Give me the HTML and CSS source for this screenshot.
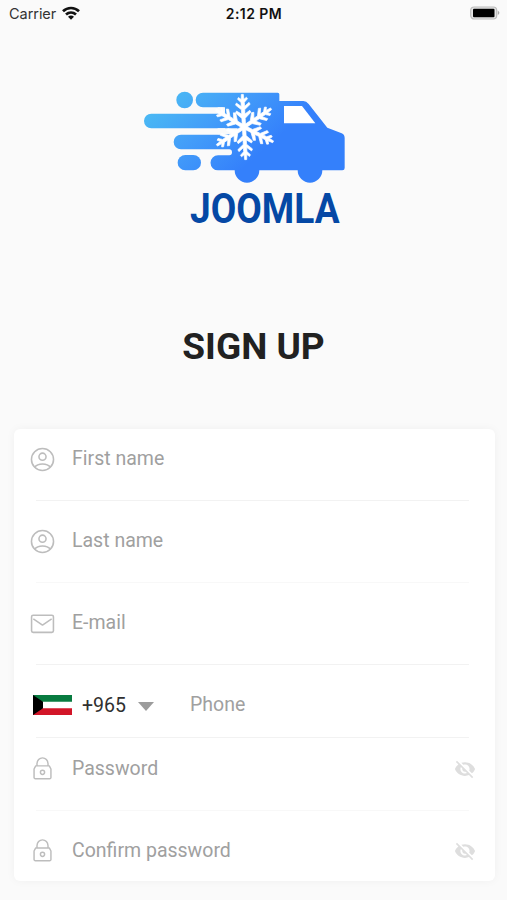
FILE: index.html
```html
<!DOCTYPE html>
<html lang="en">
<head>
<meta charset="utf-8">
<title>Sign up</title>
<link rel="stylesheet" href="styles.css">
</head>
<body>
<svg class="defs" width="0" height="0" aria-hidden="true">
  <symbol id="user" viewBox="0 0 24 24"><g fill="none" stroke="currentColor" stroke-width="1.5"><circle cx="12" cy="12" r="10.6"/><circle cx="12" cy="9.3" r="3.4"/><path d="M4.400 19.400C6.200 17 9 16.300 12 16.300s5.800.7 7.600 3.100"/></g></symbol>
  <symbol id="mail" viewBox="0 0 24 24"><g fill="none" stroke="currentColor" stroke-width="1.500" stroke-linejoin="round"><rect x="1.500" y="4" width="21" height="16.500" rx="1.500"/><path d="M3.200 7.500 12 13.500l8.800-6"/></g></symbol>
  <symbol id="lock" viewBox="0 0 24 24"><g fill="none" stroke="currentColor" stroke-width="1.400"><path d="M5.500 9.500h13l1.600 3v8.100a1.200 1.200 0 0 1-1.200 1.200H5.100a1.200 1.200 0 0 1-1.200-1.200v-8.100z" stroke-linejoin="round"/><path d="M6.700 9.500V7.500a5.300 5.700 0 0 1 10.600 0v2"/><circle cx="12" cy="15.700" r="2"/></g></symbol>
  <symbol id="hidden" viewBox="0 0 24 24"><path fill="currentColor" d="M12 7c2.760 0 5 2.240 5 5 0 .65-.13 1.260-.36 1.830l2.920 2.920c1.510-1.260 2.700-2.890 3.430-4.750-1.730-4.390-6-7.500-11-7.500-1.400 0-2.740.25-3.980.7l2.160 2.160C10.740 7.130 11.350 7 12 7zM2 4.270l2.280 2.280.46.46C3.080 8.300 1.780 10.020 1 12c1.730 4.390 6 7.500 11 7.500 1.550 0 3.030-.3 4.380-.84l.42.42L19.730 22 21 20.730 3.270 3 2 4.270zM7.530 9.800l1.550 1.550c-.05.21-.08.43-.08.65 0 1.660 1.340 3 3 3 .22 0 .44-.03.65-.08l1.550 1.550c-.67.33-1.410.53-2.200.53-2.760 0-5-2.240-5-5 0-.79.2-1.530.53-2.200z"/></symbol>
</svg>
<header class="status">
  <div class="carrier">Carrier
    <svg class="wifi" viewBox="0 0 18 14"><g fill="none" stroke="#111" stroke-width="2.700"><path d="M1 5.200C5.500.9 12.500.9 17 5.200"/><path d="M4 8.500c2.900-2.600 7.100-2.600 10 0"/></g><path d="M6 10.700c1.700-1.500 4.300-1.500 6 0l-3 3z" fill="#111"/></svg>
  </div>
  <div class="clock">2:12 PM</div>
  <svg class="battery" viewBox="0 0 32 16"><rect x="1.700" y="2" width="26" height="12" rx="3.500" fill="#e6e6e6" stroke="#bcbcbc" stroke-width="1.200"/><rect x="4" y="3.800" width="21.500" height="8.500" rx="1" fill="#000"/><path d="M28.800 5.500q3.200 2.300 0 4.600z" fill="#aaa"/></svg>
</header>
<main>
  <div class="brand">
    <svg class="logo" viewBox="0 0 660 315">
      <defs>
        <linearGradient id="sky" gradientUnits="userSpaceOnUse" x1="110" y1="10" x2="330" y2="260"><stop offset="0" stop-color="#4bbcf3"/><stop offset=".5" stop-color="#439df9"/><stop offset="1" stop-color="#3480fb"/></linearGradient>
        <path id="arm" d="M-5 0L-5-26-23-43-20-49-5-39V-52L-22-67-19-73-5-62V-74L-15-84-12-89-4-83-3-98H3L4-83 12-89 15-84 5-74V-62L19-73 22-67 5-52V-39L20-49 23-43 5-26 5 0z"/>
      </defs>
      <g fill="url(#sky)">
        <circle cx="149" cy="60" r="25"/>
        <rect x="128" y="225" width="70" height="46" rx="23"/>
        <path d="M204 38H428q5 0 5 5V63h72q9 0 16 9l56 71 43 17q9 4 9 14v90q0 7-7 7H562a37 37 0 0 1-74 0H373a37 37 0 0 1-74 0H249a22.500 22.500 0 0 1 0-45h34q8 0 8-9t-8-9H138a22 22 0 0 1 0-44H270V145H49a22 22 0 0 1 0-44H270V82H204a22 22 0 0 1 0-44z"/>
      </g>
      <path d="M447 78h54l40 52h-94z" fill="#fff"/>
      <path d="M248 82h15q6 0 6 10v9h-18zM248 145h60v13l-12 5h-48z" fill="#fafafa"/>
      <g transform="translate(327 141)" fill="#fff" stroke="#fff" stroke-width="2" stroke-linejoin="round">
        <use href="#arm" transform="rotate(-3)"/><use href="#arm" transform="rotate(56)"/><use href="#arm" transform="rotate(117)"/><use href="#arm" transform="rotate(177)"/><use href="#arm" transform="rotate(236)"/><use href="#arm" transform="rotate(301)"/>
      </g>
    </svg>
    <div class="wordmark">JOOMLA</div>
  </div>
  <h1>SIGN UP</h1>
  <form class="card">
    <div class="row first"><svg class="icon"><use href="#user"/></svg><span>First name</span></div>
    <div class="row faint"><svg class="icon"><use href="#user"/></svg><span>Last name</span></div>
    <div class="row"><svg class="icon"><use href="#mail"/></svg><span>E-mail</span></div>
    <div class="row phone">
      <svg class="flag" viewBox="0 0 39 20"><path fill="#fff" d="M0 0h39v20H0z"/><path fill="#087b40" d="M0 0h39v6.700H0z"/><path fill="#d21528" d="M0 13.300h39V20H0z"/><path d="M0 0l10 6.700v6.600L0 20z"/></svg>
      <span class="code">+965</span><i class="caret"></i><span>Phone</span>
    </div>
    <div class="row password faint"><svg class="icon"><use href="#lock"/></svg><span>Password</span><svg class="eye"><use href="#hidden"/></svg></div>
    <div class="row last"><svg class="icon"><use href="#lock"/></svg><span>Confirm password</span><svg class="eye"><use href="#hidden"/></svg></div>
  </form>
</main>
</body>
</html>
```
FILE: styles.css
```css
* { box-sizing: border-box; }
body { margin: 0; height: 900px; overflow: hidden; background: #fafafa; font-family: Roboto, "Liberation Sans", sans-serif; }
.defs { display: block; }
.status { height: 28px; padding: 0 6px 0 9px; display: grid; grid-template-columns: 1fr auto 1fr; align-items: center; font: 15px/28px Inter, sans-serif; color: #333; }
.carrier { display: flex; align-items: center; gap: 6px; font-size: 14.5px; letter-spacing: -.05px; }
.wifi { width: 18px; height: 14px; margin-top: -2px; }
.clock { margin-right: 2px; font-size: 14px; font-weight: 600; color: #111; letter-spacing: .45px; }
.battery { width: 32px; height: 16px; justify-self: end; margin-top: -2px; }
main { display: flex; flex-direction: column; }
.brand { width: 220px; height: 155px; margin: 52px 0 0 135px; }
.logo { display: block; width: 220px; height: 105px; }
.wordmark { width: 170px; height: 47px; margin-left: 55px; font-size: 41.7px; line-height: 47px; font-weight: 700; color: #0548a5; white-space: nowrap; transform: scaleX(.889); transform-origin: 0 50%; }
h1 { margin: 90px 0 0; height: 44px; font-size: 37px; line-height: 44px; font-weight: 700; text-align: center; color: #212121; }
.card { width: 481px; height: 452px; margin: 60px 0 0 14px; background: #fff; border-radius: 6px; box-shadow: 0 0 10px rgba(0,0,0,.045); }
.row { position: relative; display: flex; align-items: center; height: 82px; padding: 0 19px 2px 16px; font-size: 19.5px; color: #a0a0a0; }
.row span { padding-bottom: 1px; }
.row::after { content: ""; position: absolute; left: 22px; right: 26px; bottom: 0; height: 1px; background: #f2f2f2; }
.row.faint::after { background: #f8f8f8; }
.row.first { height: 72px; padding-bottom: 12px; }
.icon { width: 25px; height: 25px; margin-right: 17px; color: #bdbdbd; flex: none; }
.row.phone { height: 73px; padding: 7px 19px 0 19px; }
.flag { width: 39px; height: 20px; }
.code { margin: 2px 0 0 10px; color: #303030; width: 46px; }
.caret { margin: 2px 36px 0 10px; border: solid transparent; border-width: 9px 8px 0; border-top-color: #9c9c9c; }
.row.password { height: 73px; padding-bottom: 12px; }
.row.last { height: 70px; padding: 9px 19px 0 16px; }
.row.last::after { display: none; }
.eye { width: 22px; height: 22px; margin-left: auto; color: #dedede; }
```
